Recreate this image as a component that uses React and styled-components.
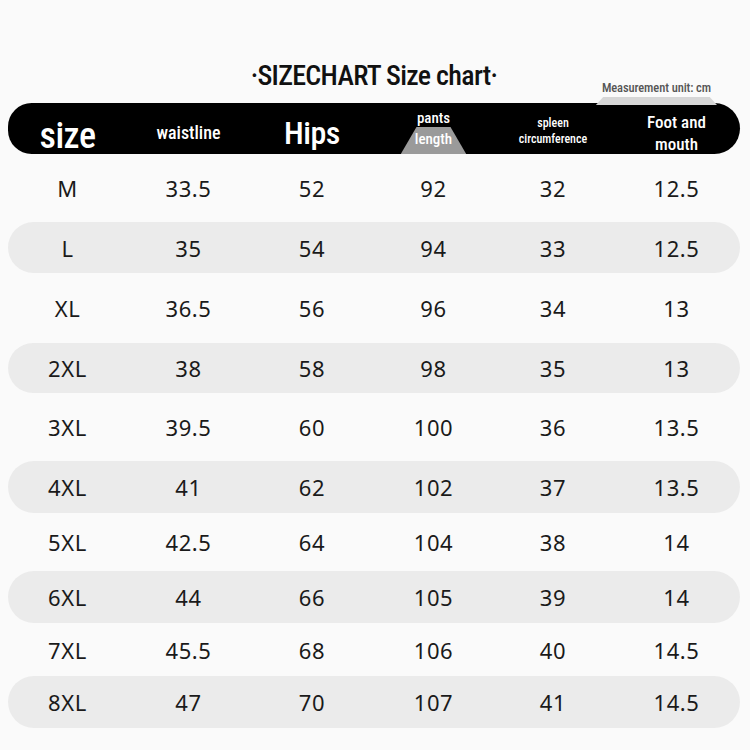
import React from 'react';
import styled, { createGlobalStyle } from 'styled-components';

const GlobalStyle = createGlobalStyle`
    html, body {
        margin: 0;
        padding: 0;
        background: #fafafa;
    }
`;

const COLS = '119px 123px 124px 119px 120px 127px';
const CONDENSED = `'Roboto Condensed', Roboto, sans-serif`;

const rows = [
    { size: 'M', h: 68, v: ['33.5', '52', '92', '32', '12.5'] },
    { size: 'L', h: 51, v: ['35', '54', '94', '33', '12.5'], striped: true },
    { size: 'XL', h: 70, v: ['36.5', '56', '96', '34', '13'] },
    { size: '2XL', h: 50, v: ['38', '58', '98', '35', '13'], striped: true },
    { size: '3XL', h: 68, v: ['39.5', '60', '100', '36', '13.5'] },
    { size: '4XL', h: 52, v: ['41', '62', '102', '37', '13.5'], striped: true },
    { size: '5XL', h: 58, v: ['42.5', '64', '104', '38', '14'] },
    { size: '6XL', h: 52, v: ['44', '66', '105', '39', '14'], striped: true },
    { size: '7XL', h: 53, v: ['45.5', '68', '106', '40', '14.5'] },
    { size: '8XL', h: 52, v: ['47', '70', '107', '41', '14.5'], striped: true }
];

const Page = styled.div`
    width: 750px;
    height: 750px;
    box-sizing: border-box;
    padding: 0 10px 0 8px;
    overflow: hidden;
`;

const TitleBar = styled.div`
    display: grid;
    grid-template-columns: 1fr auto 1fr;
    align-items: end;
    height: 103px;
    box-sizing: border-box;
    padding-bottom: 8px;
`;

const Title = styled.h1`
    grid-column: 2;
    margin: 0 0 3px;
    font-family: ${CONDENSED};
    font-weight: 500;
    font-size: 28px;
    line-height: 32px;
    letter-spacing: -0.7px;
    color: #111;
`;

const Unit = styled.div`
    grid-column: 3;
    justify-self: end;
    position: relative;
    margin-right: 23px;
    padding: 0 6px;
    font-family: ${CONDENSED};
    font-weight: 500;
    font-size: 12.5px;
    line-height: 14px;
    letter-spacing: -0.1px;
    color: #555;

    /* 단위 글자 아래 회색 탭 */
    &::after {
        content: '';
        position: absolute;
        left: 0;
        right: 0;
        top: 16px;
        height: 8px;
        background: #d6d6d6;
        clip-path: polygon(6% 0, 94% 0, 100% 100%, 0 100%);
    }
`;

const Header = styled.div`
    display: grid;
    grid-template-columns: ${COLS};
    height: 51px;
    background: #000;
    border-radius: 26px 28px 28px 26px;
    color: #fff;
    font-family: ${CONDENSED};
    font-weight: 500;
`;

const HeadCell = styled.div`
    position: relative;
    display: flex;
    flex-direction: column;
    align-items: center;
    justify-content: center;
    box-sizing: border-box;
    padding-top: ${p => p.$shift || 0}px;
    font-size: ${p => p.$size}px;
    line-height: ${p => p.$lh || p.$size + 2}px;
    letter-spacing: ${p => p.$ls || 0}px;
    text-align: center;
`;

const Highlight = styled.span`
    position: relative;
    z-index: 1;

    &::before {
        content: '';
        position: absolute;
        z-index: -1;
        left: -14px;
        right: -14px;
        top: -2px;
        bottom: -4px;
        background: #9a9a9a;
        clip-path: polygon(24% 0, 76% 0, 100% 100%, 0 100%);
    }
`;

const Row = styled.div`
    display: grid;
    grid-template-columns: ${COLS};
    align-items: center;
    height: ${p => p.$h}px;
    background: ${p => (p.$striped ? '#ebebeb' : 'transparent')};
    border-radius: 26px;
`;

const Cell = styled.div`
    text-align: center;
    font-family: 'Noto Sans', sans-serif;
    font-size: 22px;
    letter-spacing: 0.6px;
    color: #1a1a1a;
`;

const App = () => {
    return (
        <>
            <GlobalStyle />
            <Page>
                <TitleBar>
                    <Title>·SIZECHART Size chart·</Title>
                    <Unit>Measurement unit: cm</Unit>
                </TitleBar>

                <Header>
                    <HeadCell $size={36} $shift={14} $ls={-0.5}>size</HeadCell>
                    <HeadCell $size={18} $shift={8}>waistline</HeadCell>
                    <HeadCell $size={32} $shift={8} $ls={-0.5}>Hips</HeadCell>
                    <HeadCell $size={15} $lh={21} $shift={0}>
                        <span>pants</span>
                        <Highlight>length</Highlight>
                    </HeadCell>
                    <HeadCell $size={12} $lh={16} $shift={3}>
                        <span>spleen</span>
                        <span>circumference</span>
                    </HeadCell>
                    <HeadCell $size={17} $lh={22} $shift={8}>
                        <span>Foot and</span>
                        <span>mouth</span>
                    </HeadCell>
                </Header>

                {rows.map(r => (
                    <Row key={r.size} $h={r.h} $striped={r.striped}>
                        <Cell>{r.size}</Cell>
                        {r.v.map((v, i) => (
                            <Cell key={i}>{v}</Cell>
                        ))}
                    </Row>
                ))}
            </Page>
        </>
    );
};

export default App;
